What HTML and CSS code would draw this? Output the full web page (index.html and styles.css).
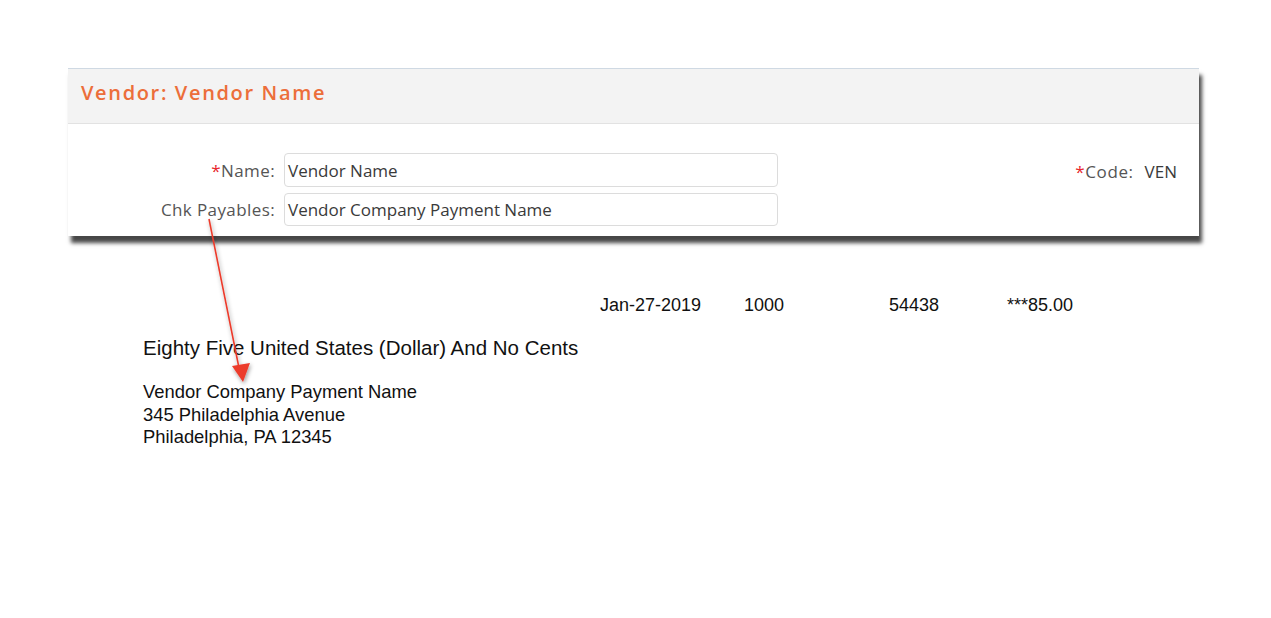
FILE: index.html
```html
<!DOCTYPE html>
<html>
<head>
<meta charset="utf-8">
<link rel="stylesheet" href="styles.css">
</head>
<body>
<div class="page">
  <section class="panel">
    <header class="panel-head">
      <h1 class="panel-title">Vendor: Vendor Name</h1>
    </header>
    <div class="panel-body">
      <div class="form-col">
        <div class="form-row">
          <label class="lbl"><span class="req">*</span>Name:</label>
          <div class="input">Vendor Name</div>
        </div>
        <div class="form-row">
          <label class="lbl">Chk Payables:</label>
          <div class="input">Vendor Company Payment Name</div>
        </div>
      </div>
      <div class="code"><span class="code-lbl"><span class="req">*</span>Code:</span><span class="code-val">VEN</span></div>
    </div>
  </section>

  <section class="check">
    <div class="check-top">
      <span class="c-date">Jan-27-2019</span>
      <span class="c-num">1000</span>
      <span class="c-chk">54438</span>
      <span class="c-amt">***85.00</span>
    </div>
    <div class="check-words">Eighty Five United States (Dollar) And No Cents</div>
    <div class="check-addr">
      <div>Vendor Company Payment Name</div>
      <div>345 Philadelphia Avenue</div>
      <div>Philadelphia, PA 12345</div>
    </div>
  </section>

  <svg class="arrow" width="1271" height="618" viewBox="0 0 1271 618">
    <defs>
      <filter id="sh" x="-50%" y="-50%" width="200%" height="200%">
        <feDropShadow dx="1" dy="2" stdDeviation="2" flood-color="#000" flood-opacity="0.4"/>
      </filter>
    </defs>
    <g filter="url(#sh)">
      <line x1="209" y1="219" x2="239" y2="368" stroke="#ec3b2c" stroke-width="1.6"/>
      <polygon points="243,382 232,366 250,363" fill="#ec3b2c"/>
    </g>
  </svg>
</div>
</body>
</html>
```

FILE: styles.css
```css
html, body {
  margin: 0;
  padding: 0;
  background: #ffffff;
}

.page {
  position: relative;
  width: 1271px;
  height: 618px;
  overflow: hidden;
  padding-top: 68px;
  box-sizing: border-box;
}

.panel {
  margin-left: 68px;
  width: 1131px;
  background: #ffffff;
  box-shadow: 3px 7px 4px rgba(0, 0, 0, 0.72);
}

.panel-head {
  height: 54px;
  background: #f3f3f3;
  border-top: 1px solid #cfd9e3;
  border-bottom: 1px solid #e2e2e2;
  display: flex;
  align-items: center;
  padding-left: 13px;
}

.panel-title {
  margin: 0;
  font-family: "Open Sans", sans-serif;
  font-weight: 600;
  font-size: 20px;
  letter-spacing: 1.65px;
  color: #ec6e3a;
  position: relative;
  top: -4px;
}

.panel-body {
  height: 112px;
  box-sizing: border-box;
  padding: 29px 22px 0 0;
  display: flex;
  justify-content: space-between;
  align-items: flex-start;
  font-family: "Open Sans", sans-serif;
  font-size: 17px;
  color: #555555;
}

.form-col {
  display: flex;
  flex-direction: column;
  gap: 6px;
}

.form-row {
  display: flex;
  align-items: center;
}

.lbl {
  width: 207px;
  text-align: right;
  padding-right: 9px;
  letter-spacing: 0.4px;
}

.req {
  color: #e8262c;
}

.input {
  width: 494px;
  height: 34px;
  box-sizing: border-box;
  border: 1.5px solid #dcdcdc;
  border-radius: 4px;
  padding: 0 0 0 3px;
  display: flex;
  align-items: center;
  color: #3a3a3a;
}

.form-row:last-child .input {
  height: 33px;
}

.code {
  padding-top: 7px;
}

.code-lbl {
  letter-spacing: 0.6px;
}

.code-val {
  margin-left: 11px;
  color: #3a3a3a;
}

.check {
  font-family: "Liberation Sans", Arial, sans-serif;
  color: #111111;
  font-size: 18px;
}

.check-top {
  display: flex;
  margin-top: 58px;
  padding-left: 600px;
  line-height: 22px;
}

.c-date { width: 144px; }
.c-num { width: 145px; }
.c-chk { width: 118px; }

.check-words {
  margin-top: 20px;
  padding-left: 143px;
  font-size: 20.5px;
  line-height: 24px;
}

.check-addr {
  margin-top: 21px;
  padding-left: 143px;
  font-size: 18.4px;
  line-height: 22.5px;
}

.arrow {
  position: absolute;
  left: 0;
  top: 0;
  pointer-events: none;
}
```
